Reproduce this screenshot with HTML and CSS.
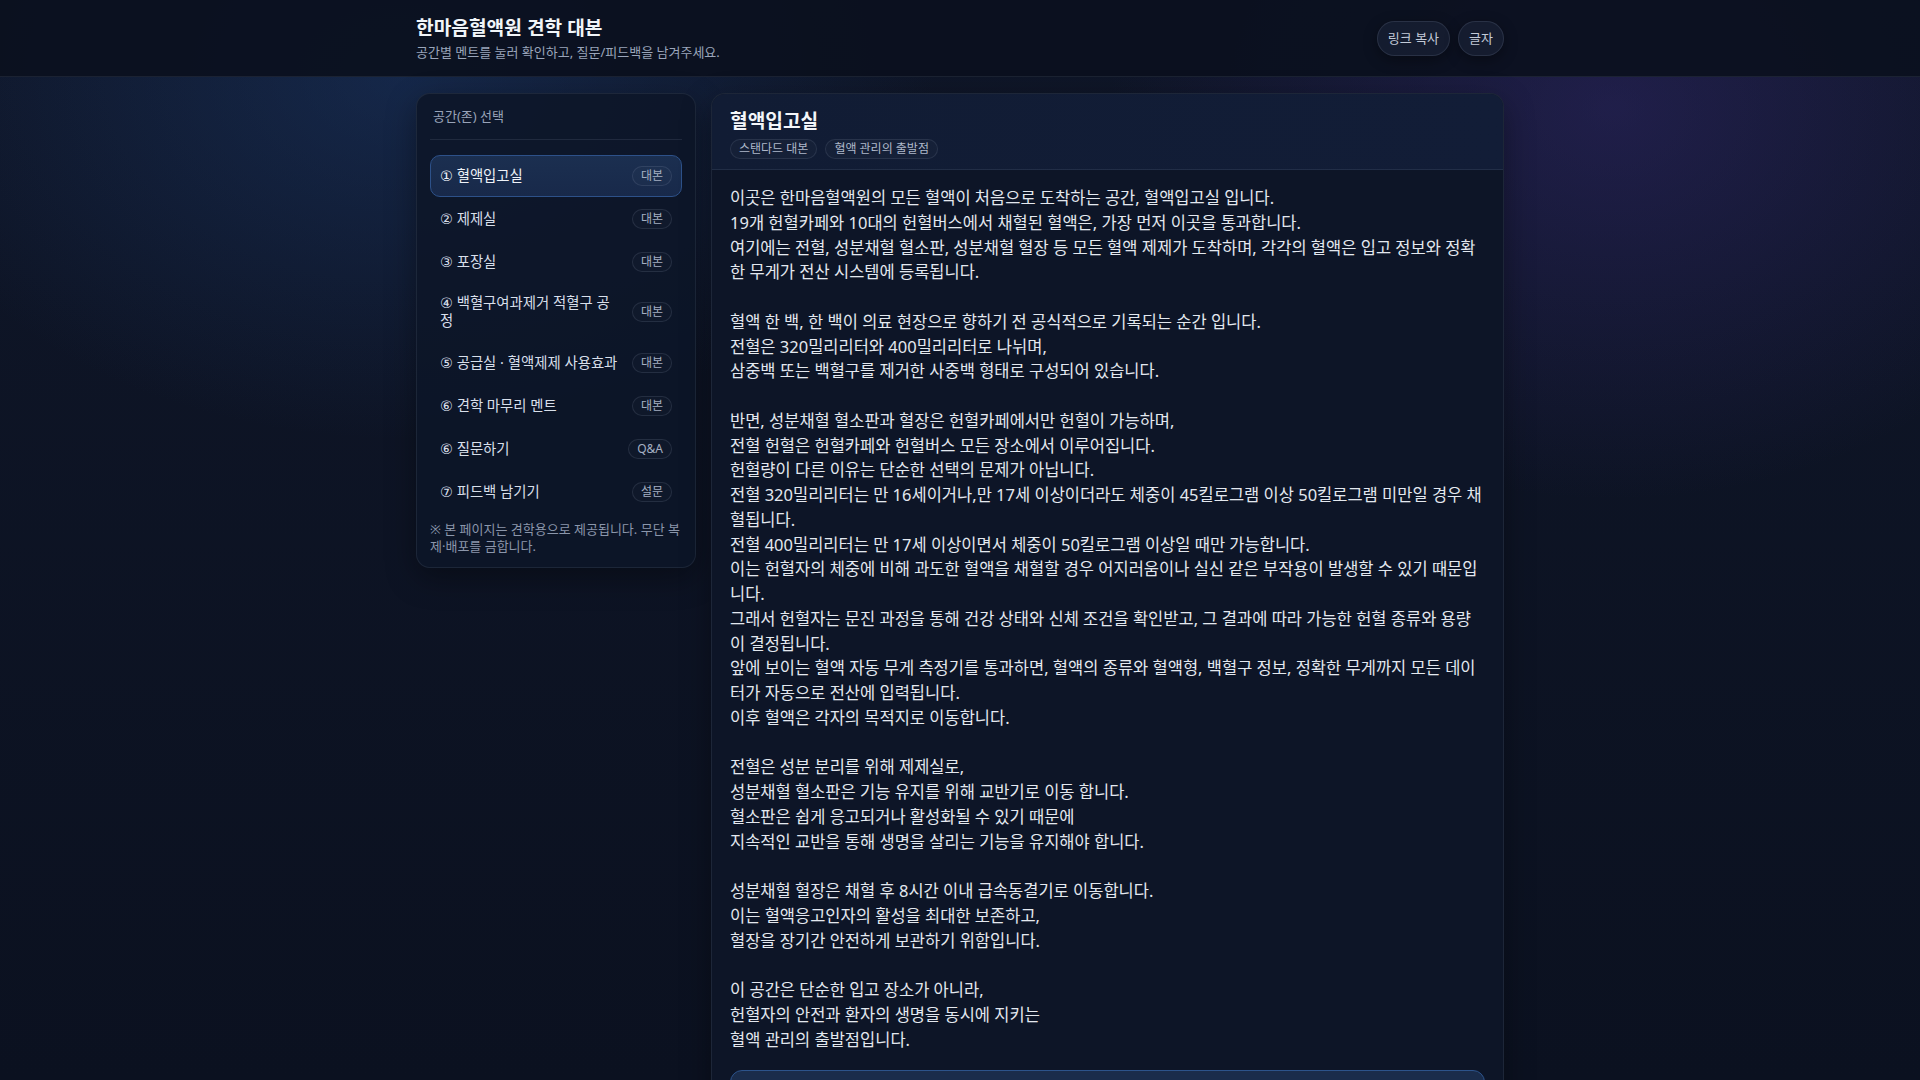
FILE: index.html
```html
<!DOCTYPE html>
<html lang="ko">
<head>
<meta charset="utf-8">
<title>한마음혈액원 견학 대본</title>
<link rel="stylesheet" href="styles.css">
</head>
<body>
<header class="topbar">
  <div class="wrap topbar-inner">
    <div class="brand">
      <h1 class="brand-title">한마음혈액원 견학 대본</h1>
      <p class="brand-sub">공간별 멘트를 눌러 확인하고, 질문/피드백을 남겨주세요.</p>
    </div>
    <div class="top-actions">
      <button class="pill-btn" type="button">링크 복사</button>
      <button class="pill-btn" type="button">글자</button>
    </div>
  </div>
</header>

<main class="wrap layout">
  <aside class="side">
    <div class="side-label">공간(존) 선택</div>
    <nav class="zones">
      <a class="zone active" href="#"><span class="zone-name">① 혈액입고실</span><span class="badge">대본</span></a>
      <a class="zone" href="#"><span class="zone-name">② 제제실</span><span class="badge">대본</span></a>
      <a class="zone" href="#"><span class="zone-name">③ 포장실</span><span class="badge">대본</span></a>
      <a class="zone" href="#"><span class="zone-name">④ 백혈구여과제거 적혈구 공정</span><span class="badge">대본</span></a>
      <a class="zone" href="#"><span class="zone-name">⑤ 공급실 · 혈액제제 사용효과</span><span class="badge">대본</span></a>
      <a class="zone" href="#"><span class="zone-name">⑥ 견학 마무리 멘트</span><span class="badge">대본</span></a>
      <a class="zone" href="#"><span class="zone-name">⑥ 질문하기</span><span class="badge">Q&amp;A</span></a>
      <a class="zone" href="#"><span class="zone-name">⑦ 피드백 남기기</span><span class="badge">설문</span></a>
    </nav>
    <p class="side-note">※ 본 페이지는 견학용으로 제공됩니다. 무단 복제·배포를 금합니다.</p>
  </aside>

  <section class="card">
    <div class="card-head">
      <h2 class="card-title">혈액입고실</h2>
      <div class="chips">
        <span class="chip">스탠다드 대본</span>
        <span class="chip">혈액 관리의 출발점</span>
      </div>
    </div>
    <div class="card-body">
      <p class="script">이곳은 한마음혈액원의 모든 혈액이 처음으로 도착하는 공간, 혈액입고실 입니다.<br>19개 헌혈카페와 10대의 헌혈버스에서 채혈된 혈액은, 가장 먼저 이곳을 통과합니다.<br>여기에는 전혈, 성분채혈 혈소판, 성분채혈 혈장 등 모든 혈액 제제가 도착하며, 각각의 혈액은 입고 정보와 정확한 무게가 전산 시스템에 등록됩니다.</p>
      <p class="script">혈액 한 백, 한 백이 의료 현장으로 향하기 전 공식적으로 기록되는 순간 입니다.<br>전혈은 320밀리리터와 400밀리리터로 나뉘며,<br>삼중백 또는 백혈구를 제거한 사중백 형태로 구성되어 있습니다.</p>
      <p class="script">반면, 성분채혈 혈소판과 혈장은 헌혈카페에서만 헌혈이 가능하며,<br>전혈 헌혈은 헌혈카페와 헌혈버스 모든 장소에서 이루어집니다.<br>헌혈량이 다른 이유는 단순한 선택의 문제가 아닙니다.<br>전혈 320밀리리터는 만 16세이거나,만 17세 이상이더라도 체중이 45킬로그램 이상 50킬로그램 미만일 경우 채혈됩니다.<br>전혈 400밀리리터는 만 17세 이상이면서 체중이 50킬로그램 이상일 때만 가능합니다.<br>이는 헌혈자의 체중에 비해 과도한 혈액을 채혈할 경우 어지러움이나 실신 같은 부작용이 발생할 수 있기 때문입니다.<br>그래서 헌혈자는 문진 과정을 통해 건강 상태와 신체 조건을 확인받고, 그 결과에 따라 가능한 헌혈 종류와 용량이 결정됩니다.<br>앞에 보이는 혈액 자동 무게 측정기를 통과하면, 혈액의 종류와 혈액형, 백혈구 정보, 정확한 무게까지 모든 데이터가 자동으로 전산에 입력됩니다.<br>이후 혈액은 각자의 목적지로 이동합니다.</p>
      <p class="script">전혈은 성분 분리를 위해 제제실로,<br>성분채혈 혈소판은 기능 유지를 위해 교반기로 이동 합니다.<br>혈소판은 쉽게 응고되거나 활성화될 수 있기 때문에<br>지속적인 교반을 통해 생명을 살리는 기능을 유지해야 합니다.</p>
      <p class="script">성분채혈 혈장은 채혈 후 8시간 이내 급속동결기로 이동합니다.<br>이는 혈액응고인자의 활성을 최대한 보존하고,<br>혈장을 장기간 안전하게 보관하기 위함입니다.</p>
      <p class="script last">이 공간은 단순한 입고 장소가 아니라,<br>헌혈자의 안전과 환자의 생명을 동시에 지키는<br>혈액 관리의 출발점입니다.</p>
      <div class="next-box">
        <span class="next-label">다음 공간</span>
        <span class="next-title">② 제제실</span>
      </div>
    </div>
  </section>
</main>
</body>
</html>
```

FILE: styles.css
```css
* { box-sizing: border-box; }

html, body {
  margin: 0;
  padding: 0;
}

body {
  min-height: 100vh;
  font-family: "Noto Sans", "DejaVu Sans", "Noto Sans CJK KR", sans-serif;
  color: #e2e8f0;
  background-color: #0c1221;
  background-image:
    radial-gradient(760px 520px at 21% 7%, rgba(30, 64, 120, 0.42), rgba(30, 64, 120, 0) 70%),
    radial-gradient(720px 560px at 84% 10%, rgba(60, 45, 130, 0.38), rgba(60, 45, 130, 0) 70%),
    linear-gradient(180deg, #0f1628 0%, #0b1120 100%);
  background-attachment: fixed;
}

.wrap {
  max-width: 1120px;
  margin: 0 auto;
  padding: 0 16px;
}

/* ---------- top bar ---------- */
.topbar {
  background: rgba(11, 16, 30, 0.92);
  border-bottom: 1px solid rgba(148, 163, 184, 0.12);
}

.topbar-inner {
  display: flex;
  align-items: center;
  justify-content: space-between;
  padding-top: 16px;
  padding-bottom: 15px;
}

.brand-title {
  margin: 0;
  font-size: 19.2px;
  line-height: 24px;
  font-weight: 700;
  color: #f1f5f9;
}

.brand-sub {
  margin: 3px 0 0;
  font-size: 13px;
  line-height: 18px;
  color: #9aa5ba;
}

.top-actions {
  display: flex;
  gap: 8px;
}

.pill-btn {
  font-family: inherit;
  font-size: 13px;
  line-height: 17px;
  color: #c3cad8;
  padding: 8px 10px;
  border-radius: 999px;
  border: 1px solid rgba(148, 163, 184, 0.16);
  background: rgba(30, 38, 60, 0.55);
  box-shadow: 0 4px 14px rgba(0, 0, 0, 0.35);
  cursor: pointer;
}

/* ---------- layout ---------- */
.layout {
  display: grid;
  grid-template-columns: 280px 1fr;
  gap: 15px;
  align-items: start;
  margin-top: 16px;
}

/* ---------- side panel ---------- */
.side {
  background: rgba(13, 22, 40, 0.88);
  border: 1px solid rgba(148, 163, 184, 0.12);
  border-radius: 14px;
  padding: 14px 13px 12px;
  box-shadow: 0 10px 30px rgba(0, 0, 0, 0.35);
}

.side-label {
  font-size: 13px;
  line-height: 17px;
  color: #98a3b8;
  padding: 0 3px 14px;
  border-bottom: 1px solid rgba(148, 163, 184, 0.14);
}

.zones {
  display: flex;
  flex-direction: column;
  gap: 1px;
  margin-top: 15px;
}

.zone {
  display: flex;
  align-items: center;
  justify-content: space-between;
  gap: 10px;
  min-height: 42px;
  padding: 9px 9px;
  border: 1px solid transparent;
  border-radius: 10px;
  text-decoration: none;
  color: #d8dfea;
  font-size: 14.4px;
  line-height: 18.4px;
}

.zone.active {
  background: linear-gradient(180deg, #1b2f50 0%, #18294a 100%);
  border-color: #2d5189;
  color: #eef2f8;
}

.zone-name {
  flex: 1 1 auto;
  min-width: 0;
}

.badge {
  flex: none;
  font-size: 12px;
  line-height: 18px;
  padding: 0 8px;
  border-radius: 999px;
  border: 1px solid rgba(148, 163, 184, 0.16);
  background: rgba(255, 255, 255, 0.015);
  color: #a5afc2;
}

.side-note {
  margin: 8px 0 0;
  font-size: 13px;
  line-height: 17px;
  color: #8b96ab;
}

/* ---------- main card ---------- */
.card {
  background: #0d1527;
  border: 1px solid rgba(148, 163, 184, 0.12);
  border-radius: 14px;
  overflow: hidden;
  box-shadow: 0 10px 30px rgba(0, 0, 0, 0.35);
}

.card-head {
  padding: 14px 18px 10px;
  background: linear-gradient(90deg, #111c34 0%, #121d37 100%);
  border-bottom: 1px solid rgba(148, 163, 184, 0.13);
}

.card-title {
  margin: 0;
  font-size: 19.2px;
  line-height: 26px;
  font-weight: 700;
  color: #f4f6fa;
}

.chips {
  display: flex;
  gap: 8px;
  margin-top: 5px;
}

.chip {
  font-size: 12px;
  line-height: 18px;
  padding: 0 8px;
  border-radius: 999px;
  border: 1px solid rgba(148, 163, 184, 0.15);
  background: rgba(255, 255, 255, 0.02);
  color: #aeb8ca;
}

.card-body {
  padding: 16px 18px 18px;
}

.script {
  margin: 0 3px 24.75px 0;
  font-size: 16.5px;
  line-height: 24.75px;
  color: #e3e8ef;
}

.script.last {
  margin-bottom: 0;
}

.next-box {
  margin-top: 18px;
  display: flex;
  flex-direction: column;
  gap: 4px;
  padding: 14px 16px;
  border-radius: 12px;
  border: 1px solid #2c538b;
  background: #1a2c4b;
}

.next-label {
  font-size: 12px;
  color: #9fb0cc;
}

.next-title {
  font-size: 15px;
  font-weight: 700;
  color: #eef2f8;
}
```
